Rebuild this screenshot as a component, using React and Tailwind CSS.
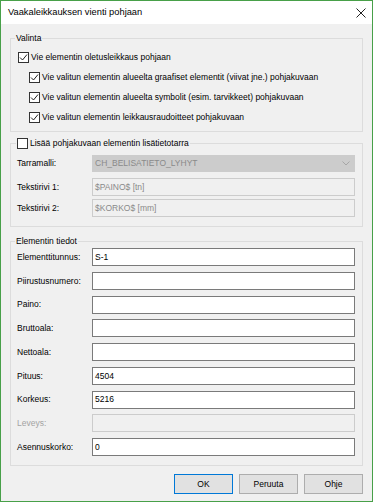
import React from 'react';

const font = { fontFamily: '"Liberation Sans", Arial, sans-serif' };

// Small Windows-style checkbox
function Check({ checked }) {
  return (
    <span className="w-[11px] h-[11px] border border-[#333333] bg-white flex items-center justify-center shrink-0">
      {checked && (
        <svg width="9" height="9" viewBox="0 0 9 9">
          <path d="M1 4.5 L3.5 7 L8 1.5" fill="none" stroke="#222" strokeWidth="1" />
        </svg>
      )}
    </span>
  );
}

function CheckRow({ label, indent }) {
  return (
    <div className={`flex items-center h-[13px] gap-[2px] ${indent ? 'pl-[18px]' : 'pl-[7px]'}`}>
      <Check checked />
      <span className="text-[8.5px] leading-none text-black whitespace-nowrap">{label}</span>
    </div>
  );
}

function Field({ label, value, disabled, grayLabel }) {
  return (
    <div className="flex items-center h-[18px]">
      <span className={`w-[75px] text-[8.5px] leading-none whitespace-nowrap ${grayLabel ? 'text-[#a3a3a3]' : 'text-black'}`}>
        {label}
      </span>
      <div
        className={`w-[263px] h-[18px] flex items-center pl-[2px] text-[8.5px] leading-none ${
          disabled ? 'bg-[#f0f0f0] border border-[#cccccc]' : 'bg-white border border-[#7a7a7a] text-black'
        }`}
      >
        {value}
      </div>
    </div>
  );
}

function Button({ children, primary }) {
  return (
    <button
      className={`w-[59px] h-[20px] bg-[#e1e1e1] text-[8.5px] leading-none text-black border ${
        primary ? 'border-[#0078d7]' : 'border-[#adadad]'
      }`}
    >
      {children}
    </button>
  );
}

export default function App() {
  return (
    <div className="w-[373px] h-[502px] border border-[#48a049] flex flex-col bg-[#f0f0f0]" style={font}>
      {/* Title bar */}
      <div className="h-[23px] bg-white flex items-center justify-between pl-[7px] pr-[6px] shrink-0">
        <span className="text-[9.3px] text-black">Vaakaleikkauksen vienti pohjaan</span>
        <svg width="10" height="10" viewBox="0 0 10 10">
          <path d="M0.5 0.5 L9.5 9.5 M9.5 0.5 L0.5 9.5" stroke="#222" strokeWidth="1" />
        </svg>
      </div>

      <div className="flex flex-col px-[9px] flex-1">
        {/* Valinta */}
        <fieldset className="mt-[8px] border border-[#dcdcdc] pt-[7px] pb-[7px] flex flex-col gap-[7px]">
          <legend className="ml-[4px] px-[1px] h-[12px] flex items-center text-[8.5px] leading-none text-black">Valinta</legend>
          <CheckRow label="Vie elementin oletusleikkaus pohjaan" />
          <CheckRow indent label="Vie valitun elementin alueelta graafiset elementit (viivat jne.) pohjakuvaan" />
          <CheckRow indent label="Vie valitun elementin alueelta symbolit (esim. tarvikkeet) pohjakuvaan" />
          <CheckRow indent label="Vie valitun elementin leikkausraudoitteet pohjakuvaan" />
        </fieldset>

        {/* Lisätietotarra */}
        <fieldset className="mt-[5px] border border-[#dcdcdc] pt-[6px] pb-[9px] pl-[6px] flex flex-col">
          <legend className="ml-[-1px] px-[1px] h-[12px] flex items-center gap-[2px]">
            <Check />
            <span className="text-[8.5px] leading-none text-black">Lisää pohjakuvaan elementin lisätietotarra</span>
          </legend>
          <div className="flex items-center h-[17px]">
            <span className="w-[75px] text-[8.5px] leading-none text-black">Tarramalli:</span>
            <div className="w-[263px] h-[17px] bg-[#cccccc] flex items-center justify-between pl-[3px] pr-[5px]">
              <span className="text-[8.5px] leading-none text-[#8a8a8a]">CH_BELISATIETO_LYHYT</span>
              <svg width="8" height="5" viewBox="0 0 8 5">
                <path d="M0.5 0.5 L4 4 L7.5 0.5" fill="none" stroke="#a6a6a6" strokeWidth="1" />
              </svg>
            </div>
          </div>
          <div className="mt-[6px] flex flex-col gap-[3px]">
            <Field label="Tekstirivi 1:" value={<span className="text-[#8a8a8a]">$PAINO$ [tn]</span>} disabled />
            <Field label="Tekstirivi 2:" value={<span className="text-[#8a8a8a]">$KORKO$ [mm]</span>} disabled />
          </div>
        </fieldset>

        {/* Elementin tiedot */}
        <fieldset className="mt-[8px] border border-[#dcdcdc] pt-[1px] pb-[9px] pl-[6px] flex flex-col gap-[5.75px]">
          <legend className="ml-[-2px] px-[1px] h-[12px] flex items-center text-[8.5px] leading-none text-black">Elementin tiedot</legend>
          <Field label="Elementtitunnus:" value="S-1" />
          <Field label="Piirustusnumero:" value="" />
          <Field label="Paino:" value="" />
          <Field label="Bruttoala:" value="" />
          <Field label="Nettoala:" value="" />
          <Field label="Pituus:" value="4504" />
          <Field label="Korkeus:" value="5216" />
          <Field label="Leveys:" value="" disabled grayLabel />
          <Field label="Asennuskorko:" value="0" />
        </fieldset>

        <div className="mt-[8px] flex justify-end gap-[6px]">
          <Button primary>OK</Button>
          <Button>Peruuta</Button>
          <Button>Ohje</Button>
        </div>
      </div>
    </div>
  );
}
